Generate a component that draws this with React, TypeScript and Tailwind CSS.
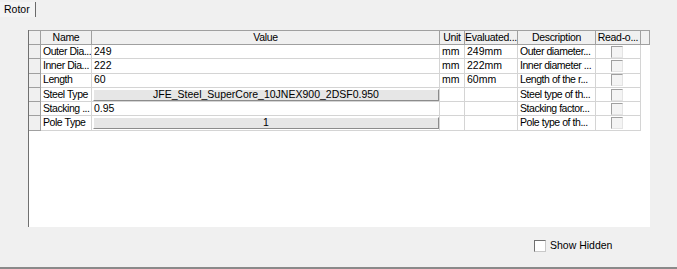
import React from "react";

type Row = {
  name: string;
  value: string;
  button?: boolean;
  unit: string;
  evaluated: string;
  desc: string;
};

const rows: Row[] = [
  { name: "Outer Dia...", value: "249", unit: "mm", evaluated: "249mm", desc: "Outer diameter..." },
  { name: "Inner Dia...", value: "222", unit: "mm", evaluated: "222mm", desc: "Inner diameter ..." },
  { name: "Length", value: "60", unit: "mm", evaluated: "60mm", desc: "Length of the r..." },
  { name: "Steel Type", value: "JFE_Steel_SuperCore_10JNEX900_2DSF0.950", button: true, unit: "", evaluated: "", desc: "Steel type of th..." },
  { name: "Stacking ...", value: "0.95", unit: "", evaluated: "", desc: "Stacking factor..." },
  { name: "Pole Type", value: "1", button: true, unit: "", evaluated: "", desc: "Pole type of th..." },
];

function HeaderCell({ w, label }: { w: string; label: string }) {
  return (
    <div
      className={`${w} h-full shrink-0 border-r border-b border-[#a0a0a0] flex items-center justify-center overflow-hidden whitespace-nowrap tracking-[-0.3px]`}
    >
      {label}
    </div>
  );
}

function Cell({ w, tight, children }: { w: string; tight?: boolean; children?: React.ReactNode }) {
  return (
    <div
      className={`${w} h-full shrink-0 border-r border-b border-[#d4d4d4] flex items-center pl-[2px] overflow-hidden whitespace-nowrap ${
        tight ? "tracking-[-0.45px]" : ""
      }`}
    >
      {children}
    </div>
  );
}

export default function App() {
  return (
    <div
      className="w-[677px] h-[269px] bg-[#f0f0f0] text-[10.5px] text-black flex flex-col overflow-hidden"
      style={{ fontFamily: '"Liberation Sans", Arial, sans-serif' }}
    >
      {/* Tab strip */}
      <div className="h-[17px] flex items-end">
        <div className="h-[15px] pl-[4px] pr-[5px] border-r border-[#6a6a6a] flex items-center bg-[#f4f4f4]">
          Rotor
        </div>
      </div>

      {/* Property grid */}
      <div className="mt-[13px] ml-[28px] w-[622px] h-[197px] bg-white border-l border-[#707070] flex flex-col">
        <div className="h-[15px] flex bg-[#f0f0f0] border-t border-[#a0a0a0]">
          <HeaderCell w="w-[12px]" label="" />
          <HeaderCell w="w-[51px]" label="Name" />
          <HeaderCell w="w-[348px]" label="Value" />
          <HeaderCell w="w-[25px]" label="Unit" />
          <HeaderCell w="w-[53px]" label="Evaluated..." />
          <HeaderCell w="w-[78px]" label="Description" />
          <HeaderCell w="w-[45px]" label="Read-o..." />
          <div className="w-[9px] h-full shrink-0 border-b border-[#a0a0a0] border-r" />
        </div>
        {rows.map((r) => (
          <div key={r.name} className="h-[14.3px] flex">
            <div className="w-[12px] h-full shrink-0 bg-[#f0f0f0] border-r border-b border-[#a0a0a0]" />
            <Cell w="w-[51px]" tight>
              {r.name}
            </Cell>
            <div className="w-[348px] h-full shrink-0 border-r border-b border-[#d4d4d4] flex items-center overflow-hidden whitespace-nowrap">
              {r.button ? (
                <div className="ml-[1px] w-[346px] h-[12px] bg-[#e6e6e6] border-t border-l border-white border-r border-b border-r-[#8c8c8c] border-b-[#8c8c8c] flex items-center justify-center">
                  {r.value}
                </div>
              ) : (
                <span className="pl-[2px]">{r.value}</span>
              )}
            </div>
            <Cell w="w-[25px]">{r.unit}</Cell>
            <Cell w="w-[53px]">{r.evaluated}</Cell>
            <Cell w="w-[78px]" tight>
              {r.desc}
            </Cell>
            <div className="w-[45px] h-full shrink-0 border-r border-b border-[#d4d4d4] flex items-center pl-[15px]">
              <div className="w-[12px] h-[12px] bg-[#f4f4f4] border-t border-l border-[#a0a0a0] border-r border-b border-r-[#e4e4e4] border-b-[#e4e4e4]" />
            </div>
          </div>
        ))}
      </div>

      {/* Footer */}
      <div className="flex-1 flex items-start">
        <div className="mt-[11px] ml-[534px] flex items-center gap-[4px]">
          <div className="w-[12px] h-[12px] bg-white border border-[#707070] border-r-[#c8c8c8] border-b-[#c8c8c8]" />
          <span>Show Hidden</span>
        </div>
      </div>
      <div className="h-[2px] bg-[#8a8a8a]" />
    </div>
  );
}
